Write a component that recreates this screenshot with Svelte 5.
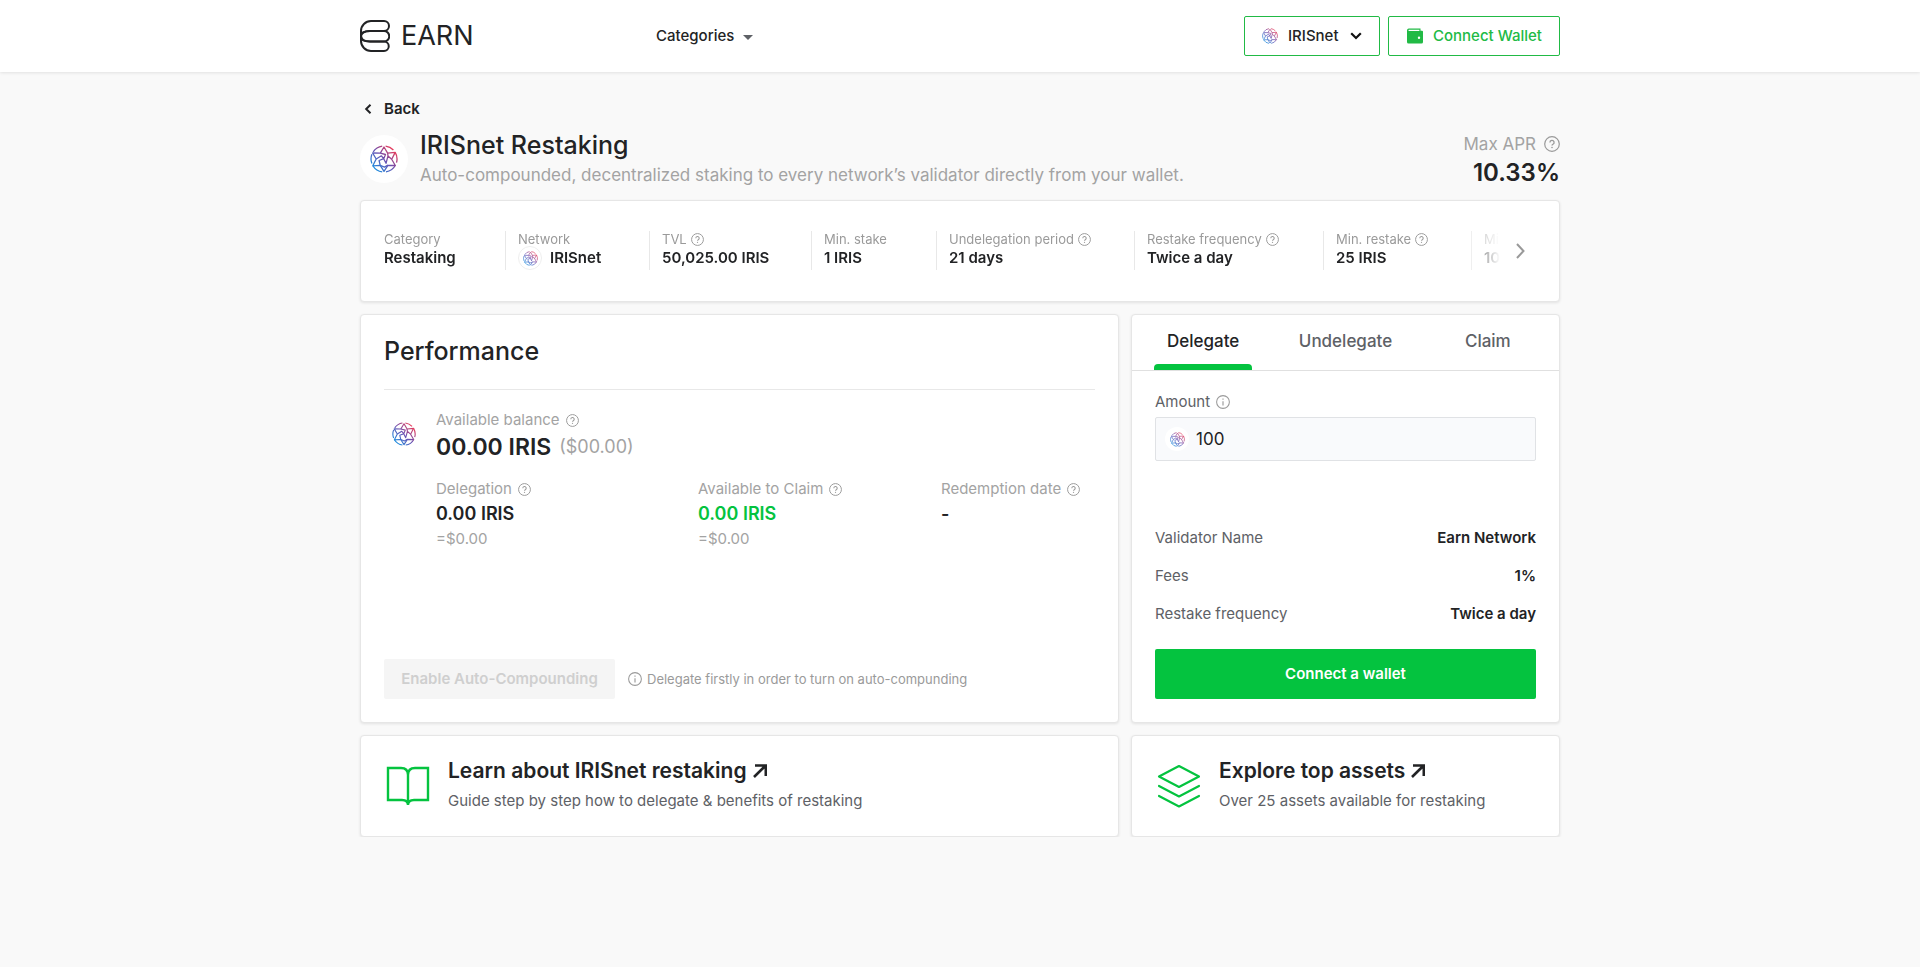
<script lang="ts">
  type Stat = { label: string; value: string; hint?: boolean; icon?: boolean };

  const stats: Stat[] = [
    { label: 'Category', value: 'Restaking' },
    { label: 'Network', value: 'IRISnet', icon: true },
    { label: 'TVL', value: '50,025.00 IRIS', hint: true },
    { label: 'Min. stake', value: '1 IRIS' },
    { label: 'Undelegation period', value: '21 days', hint: true },
    { label: 'Restake frequency', value: 'Twice a day', hint: true },
    { label: 'Min. restake', value: '25 IRIS', hint: true },
    { label: 'Min. claim', value: '10 IRIS', hint: true },
  ];

  const details = [
    { name: 'Validator Name', value: 'Earn Network' },
    { name: 'Fees', value: '1%' },
    { name: 'Restake frequency', value: 'Twice a day' },
  ];

  const tabs = ['Delegate', 'Undelegate', 'Claim'];
  let activeTab = $state('Delegate');
  let amount = $state('100');
  let network = $state('IRISnet');
</script>

{#snippet iris()}
  <svg class="iris" viewBox="0 0 28 28" fill="none" stroke="url(#iris-gradient)" stroke-width="1.3" stroke-linejoin="round" aria-hidden="true">
    <path d="M15.6 1.1A13 13 0 0 1 23.4 5M25.2 7.4A13 13 0 0 1 26.5 17.6M25.4 20.3A13 13 0 0 1 16 26.9M12.2 26.9A13 13 0 0 1 3 21M1.9 18.6A13 13 0 0 1 1.9 9.2M3.2 6.8A13 13 0 0 1 12.2 1.1" />
    <path d="M14 2l3.6 6.2 7.6-.8-3.5 6.8 3.6 6.3-7.4-.2L14 26.4l-3.8-6-7.4.4 3.4-6.8-3.6-6 7.7.2z" />
    <path d="M10.3 8.2l5.2 1.3-1.8 4.2 2.3 4.6 2-7.4 3.7 3.3M6.2 14l5.2-3.2 2.3 2.9-4.6 1.8 1.1 4.9 4.3 1.7 3.4-2M17.6 8.2l.4 2.7" />
  </svg>
{/snippet}

{#snippet help()}
  <svg class="hint" viewBox="0 0 16 16" fill="none" stroke="currentColor" aria-hidden="true">
    <circle cx="8" cy="8" r="7.3" stroke-width="1.2" />
    <path d="M5.9 6.4a2.1 2.1 0 1 1 3.1 1.9c-.7.4-1 .7-1 1.3" stroke-width="1.3" />
    <circle cx="8" cy="11.5" r=".8" fill="currentColor" stroke="none" />
  </svg>
{/snippet}

{#snippet info()}
  <svg class="hint" viewBox="0 0 16 16" fill="none" stroke="currentColor" aria-hidden="true">
    <circle cx="8" cy="8" r="7.3" stroke-width="1.2" />
    <path d="M8 7v5M8 4v1.5" stroke-width="1.3" />
  </svg>
{/snippet}

{#snippet arrow()}
  <svg class="arrow" viewBox="0 0 14 14" fill="none" stroke="currentColor" stroke-width="2.6" aria-hidden="true">
    <path d="M1 13L12.4 1.8M2 1.5h10.8V12" />
  </svg>
{/snippet}

<svg class="defs" aria-hidden="true">
  <linearGradient id="iris-gradient" gradientUnits="userSpaceOnUse" x1="4" y1="24" x2="24" y2="4">
    <stop offset="0" stop-color="#1a8fe0" />
    <stop offset=".5" stop-color="#6a4fb0" />
    <stop offset="1" stop-color="#f03a55" />
  </linearGradient>
</svg>

<header>
  <div class="container bar">
    <a class="brand" href="/">
      <svg viewBox="0 0 30 32" fill="none" stroke="currentColor" stroke-width="2" aria-hidden="true">
        <path d="M11 1h13a5 5 0 0 1 0 10H10C4 11 1 13.500 1 16V11A10 10 0 0 1 11 1z" />
        <path d="M10 11h14a5 5 0 0 1 0 10.500H10C4 21.500 1 19 1 16s3-5 9-5z" />
        <path d="M10 21.500h14a4.750 4.750 0 0 1 0 9.500H11A10 10 0 0 1 1 21v-5c0 3 3 5.500 9 5.500z" />
      </svg>
      <span>EARN</span>
    </a>
    <nav>
      <button class="categories">
        Categories
        <svg viewBox="0 0 10 5" fill="#5e6166" aria-hidden="true"><path d="M0 0h10L5 5z" /></svg>
      </button>
    </nav>
    <div class="actions">
      <label class="network">
        {@render iris()}
        <select bind:value={network} aria-label="Network">
          <option>IRISnet</option>
        </select>
        <svg class="down" viewBox="0 0 12 8" fill="none" stroke="#111" stroke-width="2.2" aria-hidden="true"><path d="M1.200 1.200L6 6l4.800-4.800" /></svg>
      </label>
      <button class="connect">
        <svg viewBox="0 0 16 16" aria-hidden="true">
          <path fill="currentColor" fill-rule="evenodd" d="M2.200.5h11.300v2.300H15a1 1 0 0 1 1 1V14a1.500 1.500 0 0 1-1.500 1.500h-13A1.500 1.500 0 0 1 0 14V2.500a2 2 0 0 1 2.200-2zM2 1.700a.6.6 0 0 0 0 1.200h10.400V1.700zM12 8.500a1.200 1.200 0 1 0 0 2.400 1.200 1.200 0 0 0 0-2.400z" />
        </svg>
        Connect Wallet
      </button>
    </div>
  </div>
</header>

<main class="container">
  <a class="back" href="/">
    <svg viewBox="0 0 8 10" fill="none" stroke="currentColor" stroke-width="2" aria-hidden="true"><path d="M6.500.8L2.200 5l4.300 4.200" /></svg>
    Back
  </a>

  <div class="heading">
    <div class="round">{@render iris()}</div>
    <div class="title">
      <h1>IRISnet Restaking</h1>
      <p>Auto-compounded, decentralized staking to every network’s validator directly from your wallet.</p>
    </div>
    <div class="apr">
      <div class="apr-label">Max APR {@render help()}</div>
      <strong>10.33%</strong>
    </div>
  </div>

  <section class="card stats">
    <div class="strip">
      {#each stats as stat (stat.label)}
        <div class="stat">
          <div class="stat-label">{stat.label} {#if stat.hint}{@render help()}{/if}</div>
          <div class="stat-value">
            {#if stat.icon}<span class="chip">{@render iris()}</span>{/if}
            {stat.value}
          </div>
        </div>
      {/each}
    </div>
    <button class="next" aria-label="Next">
      <svg viewBox="0 0 9 16" fill="none" stroke="currentColor" stroke-width="2" aria-hidden="true"><path d="M1 1l6.500 7L1 15" /></svg>
    </button>
  </section>

  <div class="grid">
    <section class="card performance">
      <h2>Performance</h2>
      <div class="balance">
        <div class="coin">{@render iris()}</div>
        <div>
          <div class="label">Available balance {@render help()}</div>
          <div class="total"><strong>00.00 IRIS</strong> <span>($00.00)</span></div>
        </div>
      </div>
      <div class="figures">
        <div>
          <div class="label">Delegation {@render help()}</div>
          <strong>0.00 IRIS</strong>
          <div class="usd">=$0.00</div>
        </div>
        <div>
          <div class="label">Available to Claim {@render help()}</div>
          <strong class="green">0.00 IRIS</strong>
          <div class="usd">=$0.00</div>
        </div>
        <div>
          <div class="label">Redemption date {@render help()}</div>
          <strong>-</strong>
        </div>
      </div>
      <div class="auto">
        <button disabled>Enable Auto-Compounding</button>
        <span>{@render info()} Delegate firstly in order to turn on auto-compunding</span>
      </div>
    </section>

    <section class="card stake">
      <div class="tabs" role="tablist">
        {#each tabs as tab (tab)}
          <button role="tab" class:active={tab === activeTab} aria-selected={tab === activeTab} onclick={() => (activeTab = tab)}>
            {tab}
          </button>
        {/each}
      </div>
      <div class="form">
        <label class="amount-label" for="amount">Amount {@render info()}</label>
        <div class="field">
          <span class="field-icon">{@render iris()}</span>
          <input id="amount" type="text" bind:value={amount} />
        </div>
        <dl>
          {#each details as detail (detail.name)}
            <div>
              <dt>{detail.name}</dt>
              <dd>{detail.value}</dd>
            </div>
          {/each}
        </dl>
        <button class="submit">Connect a wallet</button>
      </div>
    </section>

    <a class="card promo" href="/learn">
      <svg viewBox="0 0 48 48" fill="none" stroke="#04c33f" stroke-width="2.400" aria-hidden="true">
        <path d="M24 13c0-4.500-2.500-7-7-7H4v32h14c4 0 6 1.500 6 5 0-3.500 2-5 6-5h14V6H31c-4.500 0-7 2.500-7 7zM24 12v30" />
      </svg>
      <div>
        <h3>Learn about IRISnet restaking {@render arrow()}</h3>
        <p>Guide step by step how to delegate &amp; benefits of restaking</p>
      </div>
    </a>

    <a class="card promo" href="/assets">
      <svg viewBox="0 0 48 48" fill="none" stroke="#04c33f" stroke-width="2.200" stroke-linejoin="round" stroke-linecap="round" aria-hidden="true">
        <path d="M24 4l20 10.500L24 25 4 14.500zM4 24l20 10.500L44 24M4 34l20 10.500L44 34" />
      </svg>
      <div>
        <h3>Explore top assets {@render arrow()}</h3>
        <p>Over 25 assets available for restaking</p>
      </div>
    </a>
  </div>
</main>

<style>
  :global(body) {
    background: #f9f9f9;
    color: #222325;
    font-family: Inter, "Open Sans", sans-serif;
    font-size: 15px;
    line-height: 20px;
  }
  h1, h2, h3, p, dl, dd {
    margin: 0;
  }
  button, input, select {
    font: inherit;
    color: inherit;
    background: none;
    border: 0;
    padding: 0;
  }
  button {
    cursor: pointer;
  }
  a {
    color: inherit;
    text-decoration: none;
  }
  svg {
    display: block;
    flex: none;
  }
  strong {
    font-weight: 600;
  }
  .defs {
    position: absolute;
    width: 0;
    height: 0;
  }
  .container {
    max-width: 1200px;
    margin: 0 auto;
  }
  .hint {
    width: 13px;
    height: 13px;
    color: #9a9a9a;
  }

  header {
    background: #fff;
    box-shadow: 0 1px 3px #00000018;
  }
  .bar {
    display: grid;
    grid-template-columns: 296px 1fr auto;
    align-items: center;
    height: 72px;
  }
  .brand {
    display: flex;
    align-items: center;
    gap: 11px;
    font-size: 27px;
  }
  .brand svg {
    width: 30px;
    height: 32px;
  }
  .categories {
    display: flex;
    align-items: center;
    gap: 9px;
    font-weight: 500;
  }
  .categories svg {
    width: 10px;
    height: 5px;
    margin-top: 3px;
  }
  .actions {
    display: flex;
    gap: 8px;
  }
  .network,
  .connect {
    box-sizing: border-box;
    display: flex;
    align-items: center;
    height: 40px;
    border: 1px solid #21ba45;
    border-radius: 2px;
    font-weight: 500;
  }
  .network {
    width: 136px;
    padding: 0 17px;
    gap: 10px;
  }
  .network .iris {
    width: 16px;
    height: 16px;
  }
  .network select {
    flex: 1;
    min-width: 0;
    appearance: none;
  }
  .down {
    width: 12px;
    height: 8px;
  }
  .connect {
    width: 172px;
    padding: 0 16px 0 18px;
    gap: 10px;
    white-space: nowrap;
    color: #21ba45;
  }
  .connect svg {
    width: 16px;
    height: 16px;
  }

  .back {
    display: inline-flex;
    align-items: center;
    gap: 12px;
    margin-top: 27px;
    padding-left: 4px;
    font-weight: 600;
  }
  .back svg {
    width: 8px;
    height: 10px;
  }
  .heading {
    display: flex;
    align-items: center;
    height: 58px;
    padding-bottom: 12px;
    margin-top: 11px;
  }
  .round {
    display: grid;
    place-items: center;
    width: 48px;
    height: 48px;
    border-radius: 50%;
    background: #fff;
  }
  .round .iris {
    width: 28px;
    height: 28px;
  }
  .title {
    flex: 1;
    margin-left: 12px;
  }
  h1, h2 {
    font-size: 25px;
    font-weight: 500;
    line-height: 32px;
  }
  .title p {
    font-size: 17px;
    line-height: 28px;
    color: #a3a3a3;
  }
  .apr {
    text-align: right;
  }
  .apr-label {
    display: flex;
    align-items: center;
    gap: 8px;
    font-size: 17px;
    line-height: 28px;
    color: #a3a3a3;
  }
  .apr-label .hint {
    width: 16px;
    height: 16px;
  }
  .apr strong {
    display: block;
    font-size: 24px;
    line-height: 30px;
  }

  .card {
    box-sizing: border-box;
    background: #fff;
    border: 1px solid #e6e6e6;
    border-radius: 4px;
    box-shadow: 0 1px 3px #00000018;
  }
  .stats {
    display: flex;
    align-items: flex-start;
    height: 102px;
    padding: 30px 34px 0 23px;
  }
  .strip {
    flex: 1;
    min-width: 0;
    display: grid;
    grid-template-columns: 122px 144px 162px 125px 198px 189px 148px 148px;
    overflow: hidden;
    mask-image: linear-gradient(to left, transparent, #000 40px);
  }
  .stat {
    height: 39px;
    white-space: nowrap;
  }
  .stat + .stat {
    border-left: 1px solid #e8e8e8;
    padding-left: 12px;
    margin-left: -1px;
  }
  .stat-label {
    display: flex;
    align-items: center;
    gap: 4px;
    font-size: 13px;
    line-height: 16px;
    color: #9a9a9a;
  }
  .stat-value {
    display: flex;
    align-items: center;
    gap: 8px;
    height: 22px;
    font-weight: 600;
  }
  .chip {
    display: grid;
    place-items: center;
    width: 22px;
    height: 22px;
    border: 1px solid #eee;
    border-radius: 50%;
  }
  .chip .iris {
    width: 15px;
    height: 15px;
  }
  .next {
    margin: 12px 0 0 16px;
    color: #999;
  }
  .next svg {
    width: 9px;
    height: 16px;
  }

  .grid {
    display: grid;
    grid-template-columns: minmax(0, 1fr) 429px;
    gap: 12px;
    margin-top: 12px;
  }
  .performance {
    display: flex;
    flex-direction: column;
    padding: 20px 23px 23px;
  }
  .performance h2 {
    padding-bottom: 22px;
    border-bottom: 1px solid #e8e8e8;
  }
  .label {
    display: flex;
    align-items: center;
    gap: 6px;
    color: #a3a3a3;
  }
  .balance {
    display: flex;
    margin-top: 20px;
  }
  .coin {
    width: 52px;
    padding: 12px 0 0 8px;
    box-sizing: border-box;
  }
  .coin .iris {
    width: 24px;
    height: 24px;
  }
  .total {
    display: flex;
    align-items: center;
    gap: 8px;
    height: 34px;
    font-size: 18px;
    color: #a3a3a3;
  }
  .total strong {
    font-size: 23px;
    color: #222325;
  }
  .figures {
    display: grid;
    grid-template-columns: 262px 243px 1fr;
    margin-top: 15px;
    padding-left: 52px;
  }
  .figures strong {
    display: block;
    font-size: 18px;
    line-height: 30px;
  }
  .figures .green {
    color: #04c33f;
  }
  .usd {
    color: #a3a3a3;
  }
  .auto {
    display: flex;
    align-items: center;
    gap: 13px;
    margin-top: auto;
    font-size: 13px;
    color: #9a9a9a;
  }
  .auto button {
    width: 231px;
    height: 40px;
    border-radius: 2px;
    background: #f5f5f5;
    font-size: 15px;
    font-weight: 600;
    color: #cfcfcf;
  }
  .auto span {
    display: flex;
    align-items: center;
    gap: 5px;
  }
  .auto .hint {
    width: 14px;
    height: 14px;
  }

  .tabs {
    display: grid;
    grid-template-columns: repeat(3, 1fr);
    height: 55px;
    border-bottom: 1px solid #e0e0e0;
  }
  .tabs button {
    position: relative;
    padding-bottom: 4px;
    font-size: 17px;
    font-weight: 500;
    color: #5e6166;
  }
  .tabs .active {
    color: #222325;
  }
  .tabs .active::after {
    content: '';
    position: absolute;
    left: 22px;
    right: 22px;
    bottom: 0;
    height: 6px;
    border-radius: 4px 4px 0 0;
    background: #04c33f;
  }
  .form {
    padding: 21px 23px 23px;
  }
  .amount-label {
    display: flex;
    align-items: center;
    gap: 6px;
    color: #5e6166;
  }
  .amount-label .hint {
    width: 14px;
    height: 14px;
  }
  .field {
    box-sizing: border-box;
    display: flex;
    align-items: center;
    gap: 7px;
    height: 44px;
    margin-top: 5px;
    padding: 0 9px;
    border: 1px solid #e0e2e5;
    border-radius: 2px;
    background: #f9fafc;
  }
  .field-icon {
    display: grid;
    place-items: center;
    width: 24px;
    height: 24px;
    border-radius: 50%;
    background: #fff;
  }
  .field-icon .iris {
    width: 15px;
    height: 15px;
  }
  .field input {
    flex: 1;
    min-width: 0;
    font-size: 17px;
    outline: 0;
  }
  dl {
    display: grid;
    gap: 18px;
    margin: 67px 0 25px;
  }
  dl div {
    display: flex;
    justify-content: space-between;
  }
  dt {
    color: #5e6166;
  }
  dd {
    font-weight: 600;
  }
  .submit {
    width: 100%;
    height: 50px;
    border-radius: 2px;
    background: #04c33f;
    color: #fff;
    font-weight: 600;
  }

  .promo {
    display: flex;
    align-items: center;
    gap: 16px;
    height: 102px;
    padding: 0 23px;
  }
  .promo > svg {
    width: 48px;
    height: 48px;
  }
  h3 {
    display: flex;
    align-items: center;
    gap: 6px;
    font-size: 21px;
    font-weight: 600;
    line-height: 30px;
  }
  .arrow {
    width: 14px;
    height: 14px;
  }
  .promo p {
    line-height: 30px;
    color: #5e6166;
  }
</style>
